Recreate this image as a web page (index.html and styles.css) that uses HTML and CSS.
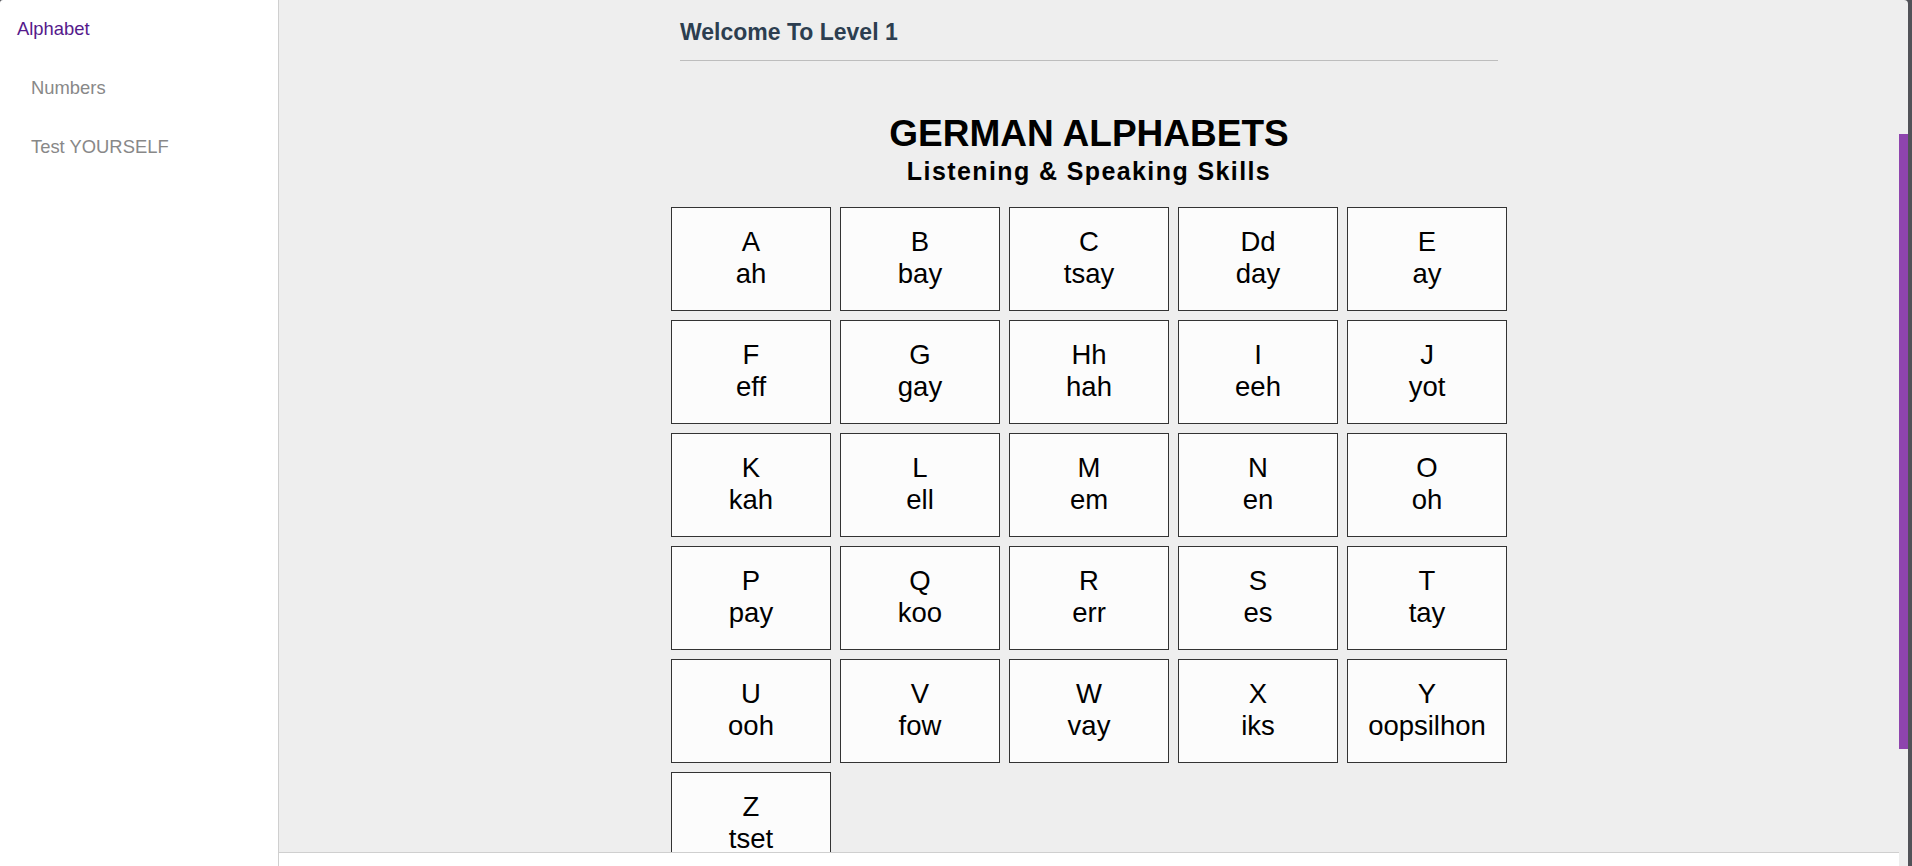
FILE: index.html
```html
<!DOCTYPE html>
<html lang="en">
<head>
<meta charset="utf-8">
<title>German Alphabets</title>
<link rel="stylesheet" href="styles.css">
</head>
<body>
<div class="app">
  <nav class="sidebar">
    <a class="nav-item active" href="#">Alphabet</a>
    <a class="nav-item" href="#">Numbers</a>
    <a class="nav-item" href="#">Test YOURSELF</a>
  </nav>
  <div class="main">
    <div class="content">
      <header class="level-header">
        <h2 class="level-title">Welcome To Level 1</h2>
      </header>
      <section class="alphabet">
        <h1 class="title">GERMAN ALPHABETS</h1>
        <h3 class="subtitle">Listening &amp; Speaking Skills</h3>
        <div class="grid">
          <div class="card"><span>A</span><span>ah</span></div>
          <div class="card"><span>B</span><span>bay</span></div>
          <div class="card"><span>C</span><span>tsay</span></div>
          <div class="card"><span>Dd</span><span>day</span></div>
          <div class="card"><span>E</span><span>ay</span></div>
          <div class="card"><span>F</span><span>eff</span></div>
          <div class="card"><span>G</span><span>gay</span></div>
          <div class="card"><span>Hh</span><span>hah</span></div>
          <div class="card"><span>I</span><span>eeh</span></div>
          <div class="card"><span>J</span><span>yot</span></div>
          <div class="card"><span>K</span><span>kah</span></div>
          <div class="card"><span>L</span><span>ell</span></div>
          <div class="card"><span>M</span><span>em</span></div>
          <div class="card"><span>N</span><span>en</span></div>
          <div class="card"><span>O</span><span>oh</span></div>
          <div class="card"><span>P</span><span>pay</span></div>
          <div class="card"><span>Q</span><span>koo</span></div>
          <div class="card"><span>R</span><span>err</span></div>
          <div class="card"><span>S</span><span>es</span></div>
          <div class="card"><span>T</span><span>tay</span></div>
          <div class="card"><span>U</span><span>ooh</span></div>
          <div class="card"><span>V</span><span>fow</span></div>
          <div class="card"><span>W</span><span>vay</span></div>
          <div class="card"><span>X</span><span>iks</span></div>
          <div class="card"><span>Y</span><span>oopsilhon</span></div>
          <div class="card"><span>Z</span><span>tset</span></div>
        </div>
      </section>
    </div>
    <footer class="footer"></footer>
  </div>
  <div class="scrollbar"><div class="thumb"></div></div>
</div>
</body>
</html>
```

FILE: styles.css
```css
html, body {
  margin: 0;
  padding: 0;
}

body {
  background: #515258;
  font-family: "Liberation Sans", Arial, sans-serif;
  overflow: hidden;
}

.app {
  display: flex;
  width: 1908px;
  height: 866px;
  overflow: hidden;
  border-top-left-radius: 3px;
}

/* Sidebar */
.sidebar {
  width: 278px;
  flex: none;
  background: #ffffff;
  border-right: 1px solid #cfcfcf;
  display: flex;
  flex-direction: column;
}

.nav-item {
  display: block;
  padding: 18px 0 19.8px 31px;
  font-size: 18.4px;
  line-height: 21px;
  color: #888888;
  text-decoration: none;
}

.nav-item.active {
  padding-left: 17px;
  color: #551a8b;
}

/* Main */
.main {
  flex: 1;
  display: flex;
  flex-direction: column;
  min-width: 0;
}

.content {
  flex: 1;
  background: #eeeeee;
  overflow: hidden;
}

.footer {
  height: 13px;
  flex: none;
  background: #ffffff;
  border-top: 1px solid #cfcfcf;
}

.level-header {
  width: 818px;
  margin: 0 auto;
  padding-top: 19px;
  padding-bottom: 15px;
  border-bottom: 1px solid #bdbdbd;
}

.level-title {
  margin: 0;
  font-size: 23px;
  line-height: 26px;
  font-weight: bold;
  color: #2c3e50;
}

.alphabet {
  display: flex;
  flex-direction: column;
  align-items: center;
}

.title {
  margin: 52px 0 2px;
  font-size: 37px;
  line-height: 42px;
  font-weight: bold;
  color: #000000;
}

.subtitle {
  margin: 0 0 22px;
  font-size: 25px;
  line-height: 28px;
  font-weight: bold;
  letter-spacing: 1.4px;
  color: #000000;
}

.grid {
  display: grid;
  grid-template-columns: repeat(5, 160px);
  grid-auto-rows: 104px;
  gap: 9px;
}

.card {
  box-sizing: border-box;
  border: 1px solid #333333;
  background: #fcfcfc;
  padding-bottom: 2px;
  display: flex;
  flex-direction: column;
  align-items: center;
  justify-content: center;
  font-size: 27.5px;
  line-height: 31.6px;
  color: #000000;
}

/* Scrollbar */
.scrollbar {
  width: 9px;
  flex: none;
  background: #eeeeee;
  border-top-right-radius: 4px;
}

.thumb {
  margin-top: 134px;
  height: 615px;
  background: #8e44ad;
}
```
